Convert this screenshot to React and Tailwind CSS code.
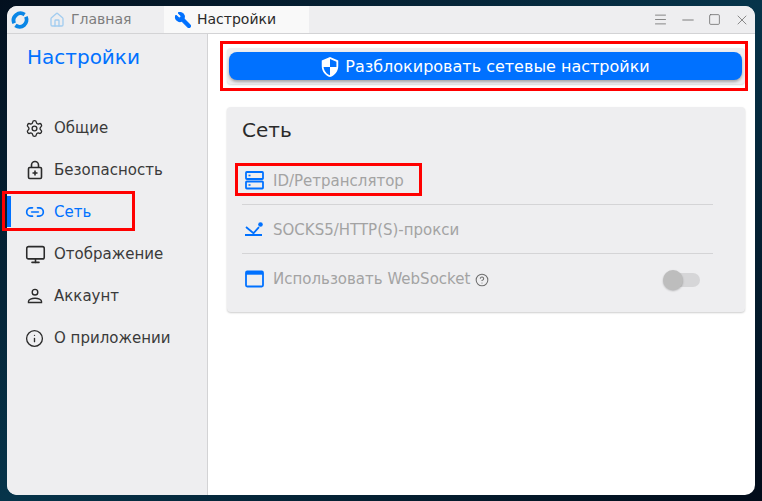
import { Wrench, Menu, Minus, Square, X, Settings, Link2, Monitor, Info, CircleHelp, House } from "lucide-react";

const font = { fontFamily: '"DejaVu Sans", sans-serif' };

function LockPlus() {
  return (
    <svg width="20" height="20" viewBox="0 0 20 20" fill="none" stroke="#2b2b2b" strokeWidth="1.6">
      <rect x="3.5" y="7.5" width="13" height="11" rx="1.2" />
      <path d="M6.5 7.5V5a3.5 3.5 0 0 1 7 0v2.5" />
      <path d="M10 10.5v5M7.5 13h5" />
    </svg>
  );
}

function PersonIcon() {
  return (
    <svg width="20" height="20" viewBox="0 0 20 20" fill="none" stroke="#2b2b2b" strokeWidth="1.4">
      <circle cx="10" cy="6.2" r="2.8" />
      <path d="M3.5 16.5v-1.2c0-1.8 3.2-3.1 6.5-3.1s6.5 1.3 6.5 3.1v1.2z" />
    </svg>
  );
}

function ServerIcon() {
  return (
    <svg width="20" height="20" viewBox="0 0 20 20" fill="none">
      <rect x="2" y="2" width="17" height="7" fill="none" stroke="#0071ff" strokeWidth="1.8" rx="0.8" />
      <rect x="2" y="11.5" width="17" height="7" fill="none" stroke="#0071ff" strokeWidth="1.8" rx="0.8" />
      <rect x="4.5" y="4.7" width="2" height="1.6" fill="#0071ff" />
      <rect x="4.5" y="14.2" width="2" height="1.6" fill="#0071ff" />
    </svg>
  );
}

function ProxyIcon() {
  return (
    <svg width="20" height="20" viewBox="0 0 20 20" fill="none">
      <path d="M2 8l7.5 6.2 5.5-6" stroke="#0071ff" strokeWidth="1.8" />
      <path d="M1 16h17" stroke="#0071ff" strokeWidth="1.8" />
      <circle cx="16.5" cy="5.5" r="2.3" fill="#0071ff" />
    </svg>
  );
}

function WindowIcon() {
  return (
    <svg width="20" height="20" viewBox="0 0 20 20" fill="none">
      <rect x="2" y="2.5" width="17" height="15" rx="1.2" stroke="#0071ff" strokeWidth="1.8" />
      <rect x="2" y="2.5" width="17" height="3.2" fill="#0071ff" />
    </svg>
  );
}

function ShieldIcon() {
  return (
    <svg width="22" height="22" viewBox="0 0 24 24" className="-scale-x-100">
      <path fill="#ffffff" d="M12 1L3 5v6c0 5.55 3.84 10.74 9 12 5.16-1.26 9-6.45 9-12V5l-9-4zm0 10.99h7c-.53 4.12-3.28 7.79-7 8.94V12H5V6.3l7-3.11v8.8z" />
    </svg>
  );
}

function AppLogo() {
  return (
    <svg width="18" height="18" viewBox="0 0 18 18" fill="none" strokeWidth="3.8" strokeLinecap="butt">
      <path d="M3.2 12.2A7 7 0 0 1 13.6 3.6" stroke="#0a86e6" />
      <path d="M14.9 5.8A7 7 0 0 1 4.4 14.4" stroke="#0a86e6" />
    </svg>
  );
}

const navItems = [
  { label: "Общие", icon: <Settings size={19} strokeWidth={1.7} /> },
  { label: "Безопасность", icon: <LockPlus /> },
  { label: "Сеть", icon: <Link2 size={20} strokeWidth={2} />, active: true },
  { label: "Отображение", icon: <Monitor size={21} strokeWidth={1.8} /> },
  { label: "Аккаунт", icon: <PersonIcon /> },
  { label: "О приложении", icon: <Info size={19} strokeWidth={1.7} /> },
];

function NavRow({ item }) {
  return (
    <div className={`relative flex h-[42px] items-center pl-[18px] text-[15px] ${item.active ? "text-[#0071ff]" : "text-[#3a3a3a]"}`}>
      {item.active && <div className="absolute left-0 top-[5px] h-[31px] w-1 bg-[#0071ff]" />}
      <span className={`flex w-[29px] items-center ${item.active ? "text-[#0071ff]" : "text-[#2b2b2b]"}`}>{item.icon}</span>
      <span>{item.label}</span>
    </div>
  );
}

function OptionRow({ icon, children, divider }) {
  return (
    <div className={`mr-8 flex h-[49px] items-center ${divider ? "border-b border-[#d4d4d6]" : ""}`}>
      <span className="flex w-[31px] items-center pl-[2px]">{icon}</span>
      <span className="flex flex-1 items-center pt-[2px]">{children}</span>
    </div>
  );
}

export default function App() {
  return (
    <div style={font} className="relative h-[501px] w-[762px] overflow-hidden bg-gradient-to-br from-[#03101f] via-[#06344a] to-[#020c1a] pb-[6px] pl-[7px] pr-[7px] pt-[6px]">
      <div className="flex h-[489px] flex-col overflow-hidden rounded-tl-[10px] rounded-tr-[10px] rounded-bl-[10px] rounded-br-[10px] bg-white">
        {/* title bar */}
        <div className="flex h-[28px] shrink-0 items-center border-b border-[#d3d3d5] bg-[#eeeef0]">
          <div className="flex w-[26px] justify-center"><AppLogo /></div>
          <div className="flex h-full w-[131px] items-center pl-[16px] text-[14px] text-[#7d7d7d]">
            <House size={16} strokeWidth={2} className="mr-[6px] text-[#a3cdf0]" />
            Главная
          </div>
          <div className="flex h-full w-[145px] items-center bg-[#f9f9f9] pl-[10px] text-[14px] text-[#2a2a2a]">
            <Wrench size={18} fill="#0071ff" stroke="#0071ff" strokeWidth={1.5} className="mr-[5px] -scale-x-100" />
            Настройки
          </div>
          <div className="ml-auto flex items-center text-[#6f6f6f]">
            <span className="flex w-[27px] justify-center"><Menu size={15} strokeWidth={1.3} /></span>
            <span className="flex w-[27px] justify-center"><Minus size={18} strokeWidth={1.2} /></span>
            <span className="flex w-[27px] justify-center"><Square size={13} strokeWidth={1.5} /></span>
            <span className="flex w-[27px] justify-center"><X size={16} strokeWidth={1.2} /></span>
          </div>
        </div>

        <div className="flex min-h-0 flex-1">
          {/* sidebar */}
          <div className="w-[201px] shrink-0 border-r border-[#d3d3d5] bg-[#eeeef0]">
            <div className="pl-[20px] pt-[8px] text-[20px] leading-[30px] text-[#0071ff]">Настройки</div>
            <div className="mt-[35px]">
              {navItems.map((item) => (
                <NavRow key={item.label} item={item} />
              ))}
            </div>
          </div>

          {/* main */}
          <div className="min-w-0 flex-1 pl-[19px] pr-[10px] pt-[14px]">
            <div className="flex h-[36px] items-center rounded-[4px] bg-[#eeeef0] px-[2px] pr-[3px] shadow-[0_1px_2px_rgba(0,0,0,0.15)]">
              <div className="flex h-[28px] w-full items-center justify-center gap-[4px] rounded-[8px] bg-[#0071ff] pr-[2px] pt-[1px] text-[16px] text-white shadow-[0_2px_3px_rgba(0,0,0,0.3)]">
                <ShieldIcon />
                Разблокировать сетевые настройки
              </div>
            </div>

            <div className="mt-[23px] h-[205px] rounded-[4px] bg-[#eeeef0] pl-[15px] pt-[9px] shadow-[0_1px_2px_rgba(0,0,0,0.2)]">
              <div className="text-[20px] leading-[28px] text-[#2a2a2a]">Сеть</div>
              <div className="mt-[12px] text-[15px] text-[#a3a3a3]">
                <OptionRow icon={<ServerIcon />} divider>ID/Ретранслятор</OptionRow>
                <OptionRow icon={<ProxyIcon />} divider>SOCKS5/HTTP(S)-прокси</OptionRow>
                <OptionRow icon={<WindowIcon />}>
                  Использовать WebSocket
                  <CircleHelp size={14} strokeWidth={1.8} className="ml-[5px] text-[#6f6f6f]" />
                  <div className="relative ml-auto mr-[13px] h-[14px] w-[34px] rounded-full bg-[#d6d6d8]">
                    <div className="absolute -left-[3px] -top-[3px] h-[20px] w-[20px] rounded-full bg-[#bdbdbd] shadow-[0_1px_2px_rgba(0,0,0,0.25)]" />
                  </div>
                </OptionRow>
              </div>
            </div>
          </div>
        </div>
      </div>

      {/* red annotation boxes drawn over the screenshot */}
      <div className="absolute left-[220px] top-[41px] h-[50px] w-[528px] border-[3px] border-[#ff0000]" />
      <div className="absolute left-[2px] top-[191px] h-[40px] w-[133px] border-[3px] border-[#ff0000]" />
      <div className="absolute left-[235px] top-[163px] h-[33px] w-[187px] border-[3px] border-[#ff0000]" />
    </div>
  );
}
